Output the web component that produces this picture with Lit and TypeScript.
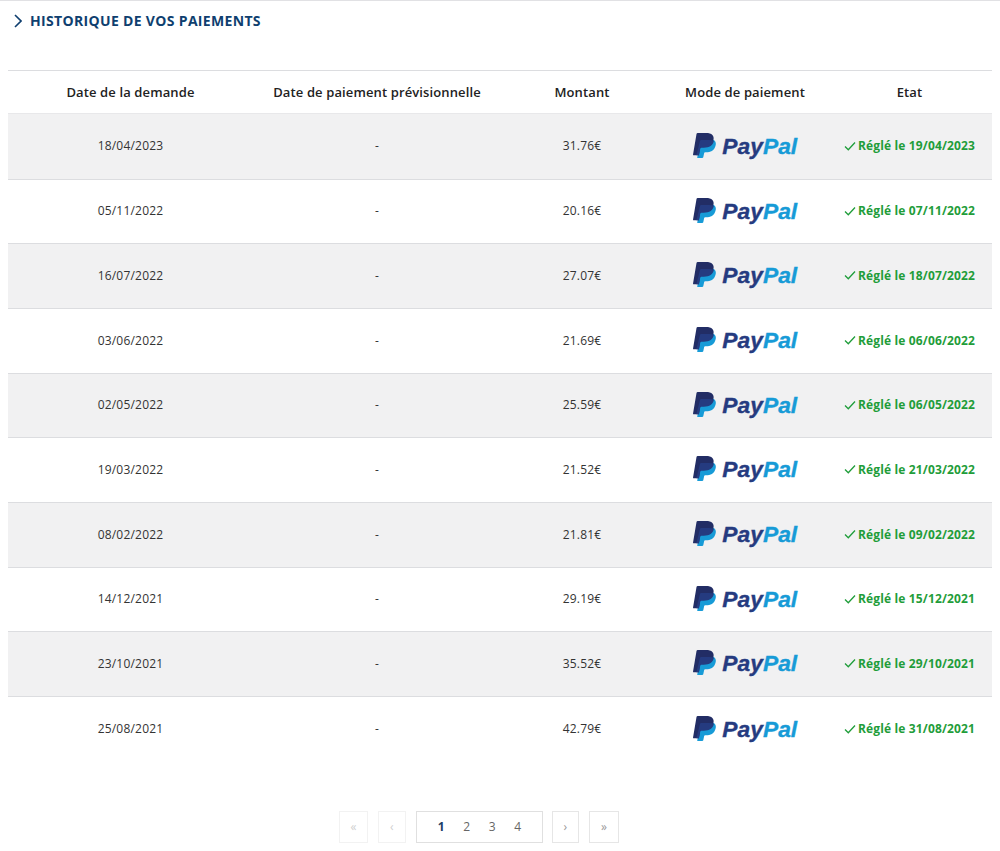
import { LitElement, html, css, svg } from "lit";
import { customElement } from "lit/decorators.js";

const rows = [
  ["18/04/2023", "31.76€", "19/04/2023"],
  ["05/11/2022", "20.16€", "07/11/2022"],
  ["16/07/2022", "27.07€", "18/07/2022"],
  ["03/06/2022", "21.69€", "06/06/2022"],
  ["02/05/2022", "25.59€", "06/05/2022"],
  ["19/03/2022", "21.52€", "21/03/2022"],
  ["08/02/2022", "21.81€", "09/02/2022"],
  ["14/12/2021", "29.19€", "15/12/2021"],
  ["23/10/2021", "35.52€", "29/10/2021"],
  ["25/08/2021", "42.79€", "31/08/2021"],
];

const mark = svg`<svg class="mark" viewBox="1.8 0 20.6 24" width="23" height="25" preserveAspectRatio="none" aria-hidden="true">
  <path fill="#179bd7" d="M18.500 6C21.500 6.500 23 9 21.900 12.500C20.800 17 17.500 18.500 13.500 18.500H12.700C12.200 18.500 11.900 18.800 11.800 19.300L11 23.200C10.900 23.700 10.500 24 10 24H6.200C5.800 24 5.500 23.700 5.600 23.300L8 13Z"/>
  <path fill="#222d65" d="M7.076 21.337H2.470a.641.641 0 0 1-.633-.74L4.944.901C5.026.382 5.474 0 5.998 0h7.460c2.570 0 4.578.543 5.690 1.810 1.010 1.150 1.304 2.420 1.012 4.287-.023.143-.047.288-.077.437-.983 5.050-4.349 6.797-8.647 6.797h-2.190c-.524 0-.968.382-1.050.900l-1.120 7.106z"/>
  <path fill="#253b80" d="M8.100 7.500c.1-.4.400-.7.900-.7h7.500c1.600 0 3 .2 4.100.7-.9 4.400-4 6.600-9.100 6.600h-2.200c-.5 0-.9.300-1 .900l-1.200 6.300H4.800z"/>
</svg>`;

@customElement("app-root")
export class AppRoot extends LitElement {
  static styles = css`
    :host {
      display: block;
      height: 851px;
      overflow: hidden;
      background: #fff;
      font-family: "Open Sans", sans-serif;
      color: #333;
      font-size: 12px;
      letter-spacing: 0.2px;
      border-top: 1px solid #e1e1e4;
      box-sizing: border-box;
    }
    .title {
      display: flex;
      align-items: center;
      gap: 8px;
      height: 39px;
      padding-left: 14px;
      color: #0f3f6f;
      font-size: 14px;
      font-weight: 700;
      letter-spacing: 0.33px;
    }
    .table {
      margin: 30px 8px 0 8px;
      border-top: 1px solid #dcdde0;
    }
    .row {
      display: grid;
      grid-template-columns: 245px 248px 162px 164px 165px;
      align-items: center;
      justify-items: center;
      height: 64.67px;
      padding-bottom: 1.6px;
      box-sizing: border-box;
      border-bottom: 1px solid #dcdde0;
    }
    .row.head {
      height: 43px;
      padding-bottom: 1px;
      color: #222;
      font-size: 13px;
      font-weight: 600;
      letter-spacing: 0.12px;
      border-bottom: 1px solid #e8e8ea;
    }
    .row.first { height: 65.8px; padding-top: 0.4px; }
    .row.alt { background: #f1f1f2; }
    .row:last-child { border-bottom: 0; }
    .paypal { display: flex; align-items: center; gap: 6.5px; height: 27px; letter-spacing: 0; }
    .mark { display: block; flex: none; margin-top: -1px; }
    .word {
      font-family: "Liberation Sans", Arial, sans-serif;
      font-style: italic;
      font-weight: 700;
      font-size: 22.8px;
      letter-spacing: 0;
      -webkit-text-stroke: 0.35px currentColor;
      color: #253b80;
      line-height: 27px;
      padding-top: 1px;
    }
    .word span { color: #179bd7; }
    .state {
      display: flex;
      align-items: center;
      gap: 2px;
      color: #1f9d3a;
      font-weight: 700;
      letter-spacing: 0.15px;
      white-space: nowrap;
    }
    .pager {
      display: flex;
      justify-content: center;
      align-items: stretch;
      gap: 10px;
      margin-top: 49px;
      padding-right: 42px;
      height: 32px;
      color: #999;
    }
    .btn {
      display: flex;
      align-items: center;
      justify-content: center;
      box-sizing: border-box;
      border: 1px solid #e6e6e6;
      font-size: 12px;
    }
    .btn.off { border-color: #f2f2f2; color: #d0d0d0; }
    .first-btn { width: 29px; }
    .prev-btn { width: 28px; }
    .next-btn { width: 27px; }
    .last-btn { width: 30px; }
    .pages {
      display: flex;
      align-items: center;
      justify-content: center;
      gap: 18.5px;
      width: 127px;
      margin-right: -1px;
      box-sizing: border-box;
      border: 1px solid #e0e0e0;
      color: #666;
    }
    .pages b { color: #1b3f66; }
  `;

  render() {
    return html`
      <div class="title">
        <svg width="8" height="14" viewBox="0 0 8 14" aria-hidden="true">
          <path d="M1 1l6 6-6 6" fill="none" stroke="#0f3f6f" stroke-width="1.600"/>
        </svg>
        HISTORIQUE DE VOS PAIEMENTS
      </div>
      <div class="table">
        <div class="row head">
          <div>Date de la demande</div>
          <div>Date de paiement prévisionnelle</div>
          <div>Montant</div>
          <div>Mode de paiement</div>
          <div>Etat</div>
        </div>
        ${rows.map(
          (r, i) => html`
            <div class="row ${i % 2 === 0 ? "alt" : ""} ${i === 0 ? "first" : ""}">
              <div>${r[0]}</div>
              <div>-</div>
              <div>${r[1]}</div>
              <div class="paypal">${mark}<div class="word">Pay<span>Pal</span></div></div>
              <div class="state">
                <svg width="12" height="10" viewBox="0 0 12 10" aria-hidden="true">
                  <path d="M1 5.500l3.300 3.300L11 1.500" fill="none" stroke="#1f9d3a" stroke-width="1.300"/>
                </svg>
                Réglé le ${r[2]}
              </div>
            </div>
          `
        )}
      </div>
      <div class="pager">
        <div class="btn off first-btn">«</div>
        <div class="btn off prev-btn">‹</div>
        <div class="pages"><b>1</b><span>2</span><span>3</span><span>4</span></div>
        <div class="btn next-btn">›</div>
        <div class="btn last-btn">»</div>
      </div>
    `;
  }
}
